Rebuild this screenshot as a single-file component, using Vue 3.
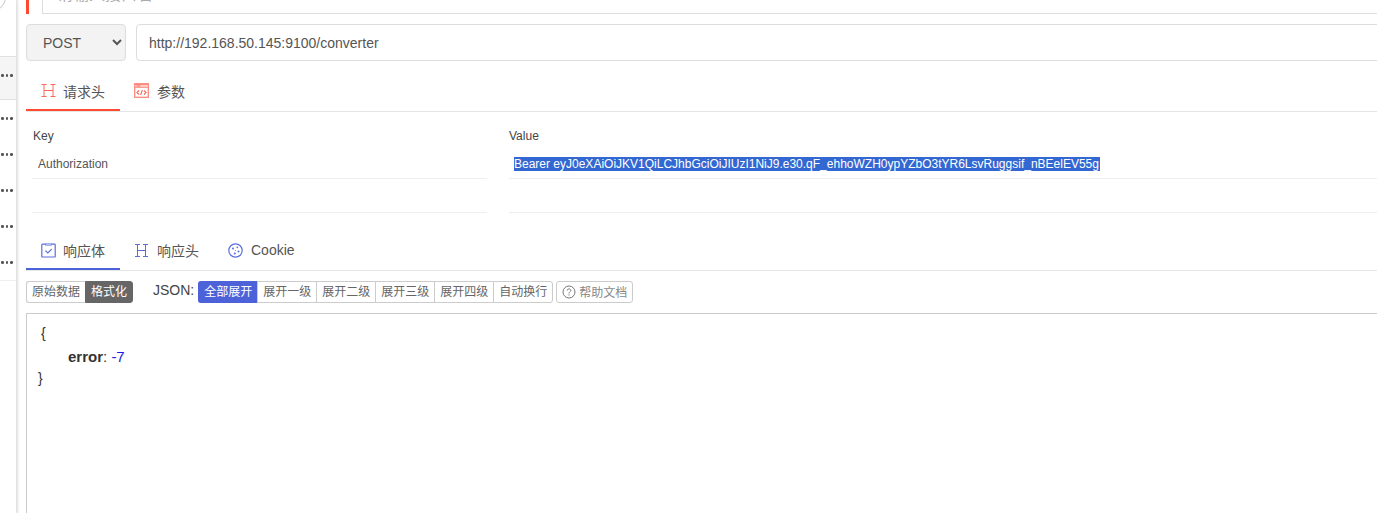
<script setup>
const sideRows = [
  { h: 44, active: true },
  { h: 36 },
  { h: 36 },
  { h: 36 },
  { h: 36 },
  { h: 37, last: true },
]
const levels = ['全部展开', '展开一级', '展开二级', '展开三级', '展开四级', '自动换行']
</script>

<template>
  <div class="page">
    <aside class="side">
      <div class="side-top"><span class="arc"></span></div>
      <div v-for="(r, i) in sideRows" :key="i" class="side-row" :class="{ active: r.active, last: r.last }" :style="{ height: r.h + 'px' }">
        <span class="dots"><i></i><i></i><i></i></span>
      </div>
    </aside>
    <main class="main">
      <div class="name-row">
        <span class="mark"></span>
        <div class="name-box">请输入接口名</div>
      </div>
      <div class="url-row">
        <select class="method"><option>POST</option></select>
        <div class="url">http://192.168.50.145:9100/converter</div>
      </div>
      <div class="tabs req">
        <div class="tab on">
          <svg class="ic" viewBox="0 0 15 15" fill="none" stroke="#f8685a" stroke-width="1"><path d="M.5 1.500h5M3 1.500v12M.5 13.500h5M9.500 1.500h5M12 1.500v12M9.500 13.500h5M3 7.500h9"/></svg>
          <span>请求头</span>
        </div>
        <div class="tab">
          <svg class="ic" viewBox="0 0 15 15" fill="none" stroke="#fa8a7e" stroke-width="1.300"><rect x=".7" y=".7" width="13.600" height="13.600" fill="#fff"/><path d="M.7 1.500h13.600V4.300H.7z" fill="#fdd5d0" stroke-width="1"/><path d="M2.500 2.900h4" stroke="#f8685a" stroke-width="1"/><path d="M5 7.500 3 9.500l2 2M10 7.500l2 2-2 2M8.400 7 6.600 12" stroke="#f8685a" stroke-width="1.100"/></svg>
          <span>参数</span>
        </div>
      </div>
      <div class="kv">
        <div class="col key">
          <div class="head">Key</div>
          <div class="cell">Authorization</div>
          <div class="cell empty"></div>
        </div>
        <div class="col val">
          <div class="head">Value</div>
          <div class="cell"><span class="sel">Bearer eyJ0eXAiOiJKV1QiLCJhbGciOiJIUzI1NiJ9.e30.qF_ehhoWZH0ypYZbO3tYR6LsvRuggsif_nBEelEV55g</span></div>
          <div class="cell empty"></div>
        </div>
      </div>
      <div class="tabs res">
        <div class="tab on">
          <svg class="ic" viewBox="0 0 15 15" fill="none" stroke="#5a6fdc" stroke-width="1.200"><path d="M4.500 1.200H1.400a.6.6 0 0 0-.6.6v11.600c0 .3.300.6.600.6h12.200c.3 0 .6-.3.6-.6V1.800a.6.6 0 0 0-.6-.6h-3.100"/><path d="M4.500.8h6v1.400h-6z" stroke-width=".8"/><path d="m4.400 7.600 2.400 2.400 3.900-3.900"/></svg>
          <span>响应体</span>
        </div>
        <div class="tab">
          <svg class="ic" viewBox="0 0 15 15" fill="none" stroke="#5a6fdc" stroke-width="1"><path d="M1 1.500h5M3.500 1.500v12M1 13.500h5M9 1.500h5M11.500 1.500v12M9 13.500h5M3.500 7.500h8"/></svg>
          <span>响应头</span>
        </div>
        <div class="tab">
          <svg class="ic" viewBox="0 0 15 15" fill="none" stroke="#5a6fdc" stroke-width="1.200"><circle cx="7.500" cy="7.500" r="6.700"/><circle cx="5" cy="5.600" r="1" fill="#5a6fdc" stroke="none"/><circle cx="9.300" cy="4.300" r=".9" fill="#5a6fdc" stroke="none"/><circle cx="10.500" cy="8.600" r="1" fill="#5a6fdc" stroke="none"/><circle cx="6.800" cy="10.500" r="1" fill="#5a6fdc" stroke="none"/><circle cx="7.500" cy="7.500" r=".5" fill="#5a6fdc" stroke="none"/></svg>
          <span>Cookie</span>
        </div>
      </div>
      <div class="toolbar">
        <div class="group">
          <span class="btn">原始数据</span><span class="btn dark">格式化</span>
        </div>
        <span class="json">JSON:</span>
        <div class="group">
          <span v-for="(l, i) in levels" :key="l" class="btn" :class="{ blue: i === 0 }">{{ l }}</span>
        </div>
        <span class="help">
          <svg class="q" viewBox="0 0 14 14" fill="none" stroke="#777" stroke-width="1"><circle cx="7" cy="7" r="6"/><path d="M5.200 5.600C5.200 4.500 6 3.900 7 3.900s1.800.6 1.800 1.600C8.800 6.800 7 6.800 7 8.400"/><path d="M7 9.400v1.200" /></svg>
          <span>帮助文档</span>
        </span>
      </div>
      <div class="editor">
        <div class="l1">{</div>
        <div class="l2"><b>error</b>: <span class="num">-7</span></div>
        <div class="l3">}</div>
      </div>
    </main>
  </div>
</template>

<style>
html, body { margin: 0; background: #fff; overflow: hidden; }
</style>

<style scoped>
.page {
  display: flex;
  height: 513px;
  width: 1377px;
  overflow: hidden;
  font-family: "Liberation Sans", "Noto Sans CJK SC", sans-serif;
  color: #555;
  background: #fff;
}
.side {
  width: 16px;
  flex: none;
  border-right: 1px solid #e4e4e4;
  box-shadow: 1px 0 2px rgba(0, 0, 0, .12);
  display: flex;
  flex-direction: column;
  overflow: hidden;
}
.side-top { height: 56px; flex: none; position: relative; }
.arc {
  position: absolute;
  left: -26px;
  top: -18px;
  width: 30px;
  height: 28px;
  border: 1px solid #ccc;
  border-radius: 50%;
}
.side-row {
  flex: none;
  box-sizing: border-box;
  padding-top: 17px;
}
.side-row.active { background: #f5f5f5; border-top: 1px solid #e0e0e0; border-bottom: 1px solid #e0e0e0; }
.side-row.last { border-bottom: 1px solid #eee; }
.dots { display: flex; gap: 2px; margin-left: 1px; }
.dots i { width: 2.500px; height: 2.500px; border-radius: 50%; background: #555; flex: none; }
.main { flex: 1; min-width: 0; padding-left: 9px; display: flex; flex-direction: column; }
.name-row { height: 14px; flex: none; display: flex; align-items: flex-end; overflow: hidden; }
.mark { width: 3px; height: 14px; background: #ff4a30; flex: none; }
.name-box {
  flex: none;
  width: 1400px;
  height: 37px;
  line-height: 33px;
  margin-left: 13px;
  box-sizing: border-box;
  border: 1px solid #ddd;
  padding-left: 14px;
  font-size: 16px;
  color: #aaa;
}
.url-row { display: flex; gap: 10px; margin-top: 10px; height: 37px; flex: none; }
.method {
  flex: none;
  width: 100px;
  height: 37px;
  box-sizing: border-box;
  background: #f3f3f3;
  border: 1px solid #ddd;
  border-radius: 4px;
  padding-left: 12px;
  font: 14px "Liberation Sans", sans-serif;
  color: #555;
  outline: none;
}
.url {
  flex: none;
  width: 1300px;
  box-sizing: border-box;
  height: 37px;
  line-height: 37px;
  border: 1px solid #ddd;
  border-radius: 4px;
  padding-left: 12px;
  font-size: 14px;
  color: #555;
}
.tabs { display: flex; height: 40px; flex: none; box-sizing: border-box; border-bottom: 1px solid #e6e6e6; }
.req { margin-top: 11px; }
.res { margin-top: 19px; height: 39px; }
.tab {
  display: flex;
  align-items: center;
  gap: 8px;
  height: 100%;
  box-sizing: border-box;
  padding: 0 15px 2px;
  font-size: 14px;
  color: #555;
  position: relative;
}
.tab.on { gap: 7px; }
.tab + .tab { padding-left: 14px; }
.tab.on::after {
  content: "";
  position: absolute;
  left: 0;
  right: 0;
  bottom: 0;
  height: 2px;
}
.req .tab.on::after { background: #ff4a30; }
.res .tab.on::after { background: #4d62d8; }
.ic { width: 15px; height: 15px; flex: none; }
.kv { display: flex; flex: none; padding-left: 6px; gap: 22px; }
.col { flex: none; }
.key { width: 455px; }
.val { flex: 1; min-width: 0; width: 880px; }
.head { height: 34px; line-height: 48px; font-size: 12px; color: #444; padding-left: 1px; }
.val .head { padding-left: 0; }
.cell {
  height: 33px;
  box-sizing: border-box;
  line-height: 36px;
  border-bottom: 1px solid #eee;
  font-size: 12px;
  padding-left: 6px;
  white-space: nowrap;
}
.val .cell { padding-left: 5px; line-height: 34px; }
.cell.empty { height: 34px; }
.sel { background: #3367d1; color: #fff; display: inline-block; line-height: 14px; vertical-align: middle; padding-right: 1px; }
.toolbar { display: flex; align-items: center; margin-top: 10px; height: 22px; flex: none; font-size: 12px; }
.group { display: flex; height: 22px; }
.btn {
  box-sizing: border-box;
  height: 22px;
  padding: 0 5px;
  line-height: 20px;
  color: #666;
  border: 1px solid #ccc;
  border-right: 0;
  white-space: nowrap;
}
.btn:first-child { border-radius: 3px 0 0 3px; }
.btn:last-child { border-right: 1px solid #ccc; border-radius: 0 3px 3px 0; }
.btn.dark { background: #666; color: #fff; border-color: #666; }
.btn.blue { background: #4d62d8; color: #fff; border-color: #4d62d8; }
.json { margin: 0 4px 4px 20px; font-size: 14px; color: #444; }
.help {
  margin-left: 3px;
  display: inline-flex;
  align-items: center;
  gap: 3px;
  height: 22px;
  box-sizing: border-box;
  border: 1px solid #ccc;
  border-radius: 3px;
  padding: 0 5px 2px 5px;
  color: #888;
}
.q { width: 14px; height: 14px; margin-top: 2px; }
.editor {
  margin-top: 10px;
  flex: 1;
  border-top: 1px solid #ccc;
  border-left: 1px solid #ccc;
  font-size: 15px;
  color: #333;
  padding-top: 8px;
}
.l1 { padding-left: 14px; line-height: 22px; font-size: 14px; }
.l2 { padding-left: 41px; line-height: 26px; }
.l3 { padding-left: 11px; line-height: 16px; font-size: 14px; }
.num { color: #1a1ae0; }
</style>
